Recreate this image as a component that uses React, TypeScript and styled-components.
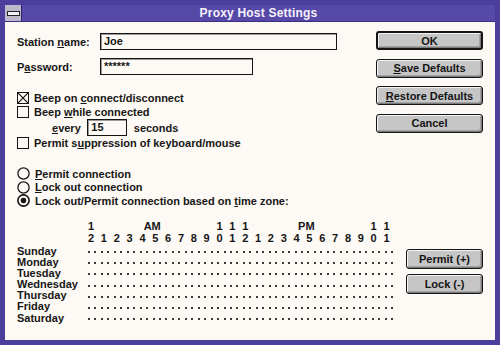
import React from 'react'
import styled, { createGlobalStyle } from 'styled-components'

const GlobalStyle = createGlobalStyle`
  html, body {
    margin: 0;
    padding: 0;
    background: #4b3e9c;
  }
  body {
    font-family: 'Liberation Sans', Arial, sans-serif;
    color: #161616;
  }
`

const FRAME = '#4b3e9c'
const PAPER = '#fdf9f4'

const Window = styled.div`
  width: 500px;
  height: 345px;
  box-sizing: border-box;
  border: 5px solid ${FRAME};
  background: ${PAPER};
  display: flex;
  flex-direction: column;
`

const TitleBar = styled.div`
  height: 16px;
  flex: none;
  display: flex;
  align-items: stretch;
  background: #5749a8;
  border-bottom: 1px solid #3b2f84;
`

const SysMenu = styled.div`
  width: 17px;
  flex: none;
  box-sizing: border-box;
  background: #bdb8cc;
  border-right: 1px solid #2c2466;
  display: flex;
  align-items: center;
  justify-content: center;
`

const SysDash = styled.span`
  width: 11px;
  height: 3px;
  background: #f4f2f8;
  border: 1px solid #222;
  box-sizing: content-box;
`

const Title = styled.div`
  flex: 1;
  text-align: center;
  color: #f6f2fb;
  font-weight: bold;
  font-size: 12px;
  letter-spacing: 0.2px;
  line-height: 16px;
`

const Body = styled.div`
  flex: 1;
  padding: 9px 12px 0 12px;
  display: flex;
  flex-direction: column;
  font-size: 11px;
  font-weight: bold;
`

const TopGrid = styled.div`
  display: grid;
  grid-template-columns: 1fr 107px;
`

const FormColumn = styled.div`
  padding-top: 2px;
  display: flex;
  flex-direction: column;
`

const FieldRow = styled.label<{ $gap?: number }>`
  display: grid;
  grid-template-columns: 83px auto;
  align-items: center;
  height: 17px;
  margin-top: ${(p) => p.$gap ?? 0}px;
`

const TextBox = styled.div<{ $width: number }>`
  width: ${(p) => p.$width}px;
  height: 17px;
  box-sizing: border-box;
  border: 1px solid #141414;
  box-shadow: inset 1px 1px 0 #9a9a9a;
  padding: 0 3px;
  line-height: 15px;
  background: ${PAPER};
`

const Mn = styled.u`
  text-decoration: underline;
  text-underline-offset: 1px;
`

const Group = styled.div<{ $gap: number }>`
  display: flex;
  flex-direction: column;
  margin-top: ${(p) => p.$gap}px;
`

const OptionRow = styled.div<{ $h: number }>`
  display: flex;
  align-items: center;
  gap: 5px;
  height: ${(p) => p.$h}px;
  white-space: nowrap;
`

const EveryRow = styled.div`
  display: flex;
  align-items: center;
  gap: 6.5px;
  height: 17px;
  padding-left: 35px;
`

const CheckBox = styled.span`
  width: 12px;
  height: 12px;
  flex: none;
  box-sizing: border-box;
  border: 1px solid #141414;
  background: ${PAPER};
  display: flex;
`

const ButtonColumn = styled.div<{ $gap: number }>`
  display: flex;
  flex-direction: column;
  gap: ${(p) => p.$gap}px;
`

const Button = styled.button<{ $default?: boolean; $h: number }>`
  height: ${(p) => p.$h}px;
  width: 100%;
  box-sizing: border-box;
  padding: 0;
  border: ${(p) => (p.$default ? 2 : 1)}px solid #151515;
  border-radius: 3px;
  background: #c6c6c6;
  box-shadow: inset 1px 1px 0 #f2f2f2, inset -1px -1px 0 #7c7c7c,
    inset -2px -2px 0 #a2a2a2;
  font-family: 'Liberation Sans', Arial, sans-serif;
  font-weight: bold;
  font-size: 11px;
  color: #141414;
`

const ScheduleSection = styled.div`
  display: flex;
  margin-top: 12.5px;
`

const Schedule = styled.div`
  display: flex;
  flex-direction: column;
`

const HourRow = styled.div`
  display: grid;
  grid-template-columns: 71px repeat(24, 12.85px);
  grid-template-rows: 12px;
  height: 12px;
  line-height: 12px;
`

const HourCell = styled.span<{ $col: number; $span?: number; $center?: boolean }>`
  grid-row: 1;
  grid-column: ${(p) => p.$col + 2} / span ${(p) => p.$span ?? 1};
  text-align: ${(p) => (p.$center ? 'center' : 'left')};
`

const Days = styled.div`
  margin-top: 1.5px;
  display: flex;
  flex-direction: column;
`

const DayRow = styled.div`
  display: grid;
  grid-template-columns: 71px repeat(48, 6.46px);
  align-items: center;
  height: 11.17px;
  line-height: 11px;
`

const Dot = styled.span`
  width: 2px;
  height: 2px;
  margin-top: 2px;
  background: #3a3a3a;
`

const SideButtons = styled(ButtonColumn)`
  width: 77px;
  margin-left: auto;
  margin-top: 29px;
`

const Check = ({ checked }: { checked?: boolean }) => (
  <CheckBox>
    {checked ? (
      <svg width="10" height="10" viewBox="0 0 10 10">
        <path d="M0 0 L10 10 M10 0 L0 10" stroke="#141414" strokeWidth="1.2" />
      </svg>
    ) : null}
  </CheckBox>
)

const Radio = ({ checked }: { checked?: boolean }) => (
  <svg width="13" height="13" viewBox="0 0 13 13" style={{ flex: 'none' }}>
    <circle cx="6.5" cy="6.5" r="5.6" fill={PAPER} stroke="#141414" strokeWidth={checked ? 1.6 : 1.3} />
    {checked ? <circle cx="6.5" cy="6.5" r="2.7" fill="#141414" /> : null}
  </svg>
)

const HOURS = Array.from({ length: 24 }, (_, i) => (i % 12 === 0 ? 12 : i % 12))
const DAYS = ['Sunday', 'Monday', 'Tuesday', 'Wednesday', 'Thursday', 'Friday', 'Saturday']

export default function App() {
  return (
    <>
      <GlobalStyle />
      <Window>
        <TitleBar>
          <SysMenu>
            <SysDash />
          </SysMenu>
          <Title>Proxy Host Settings</Title>
        </TitleBar>
        <Body>
          <TopGrid>
            <FormColumn>
              <FieldRow>
                <span>
                  Station <Mn>n</Mn>ame:
                </span>
                <TextBox $width={237}>Joe</TextBox>
              </FieldRow>
              <FieldRow $gap={8}>
                <span>
                  P<Mn>a</Mn>ssword:
                </span>
                <TextBox $width={153}>******</TextBox>
              </FieldRow>

              <Group $gap={16}>
                <OptionRow $h={14}>
                  <Check checked />
                  <span>
                    Beep on <Mn>c</Mn>onnect/disconnect
                  </span>
                </OptionRow>
                <OptionRow $h={14}>
                  <Check />
                  <span>
                    Beep <Mn>w</Mn>hile connected
                  </span>
                </OptionRow>
                <EveryRow>
                  <span>
                    <Mn>e</Mn>very
                  </span>
                  <TextBox $width={40}>15</TextBox>
                  <span>seconds</span>
                </EveryRow>
                <OptionRow $h={14}>
                  <Check />
                  <span>
                    Permit s<Mn>u</Mn>ppression of keyboard/mouse
                  </span>
                </OptionRow>
              </Group>

              <Group $gap={17}>
                <OptionRow $h={13.5}>
                  <Radio />
                  <span>
                    <Mn>P</Mn>ermit connection
                  </span>
                </OptionRow>
                <OptionRow $h={13.5}>
                  <Radio />
                  <span>
                    <Mn>L</Mn>ock out connection
                  </span>
                </OptionRow>
                <OptionRow $h={13.5}>
                  <Radio checked />
                  <span>
                    Lock out/Permit connection based on <Mn>t</Mn>ime zone:
                  </span>
                </OptionRow>
              </Group>
            </FormColumn>

            <ButtonColumn $gap={8.67}>
              <Button $default $h={19}>
                OK
              </Button>
              <Button $h={19}>
                <Mn>S</Mn>ave Defaults
              </Button>
              <Button $h={19}>
                <Mn>R</Mn>estore Defaults
              </Button>
              <Button $h={19}>Cancel</Button>
            </ButtonColumn>
          </TopGrid>

          <ScheduleSection>
            <Schedule>
              <HourRow>
                {HOURS.map((h, i) =>
                  h >= 10 ? (
                    <HourCell key={i} $col={i}>
                      1
                    </HourCell>
                  ) : null
                )}
                <HourCell $col={4} $span={2} $center>
                  AM
                </HourCell>
                <HourCell $col={16} $span={2} $center>
                  PM
                </HourCell>
              </HourRow>
              <HourRow>
                {HOURS.map((h, i) => (
                  <HourCell key={i} $col={i}>
                    {h % 10}
                  </HourCell>
                ))}
              </HourRow>
              <Days>
                {DAYS.map((d) => (
                  <DayRow key={d}>
                    <span>{d}</span>
                    {Array.from({ length: 48 }, (_, i) => (
                      <Dot key={i} />
                    ))}
                  </DayRow>
                ))}
              </Days>
            </Schedule>
            <SideButtons $gap={5}>
              <Button $h={20}>Permit (+)</Button>
              <Button $h={20}>Lock (-)</Button>
            </SideButtons>
          </ScheduleSection>
        </Body>
      </Window>
    </>
  )
}
